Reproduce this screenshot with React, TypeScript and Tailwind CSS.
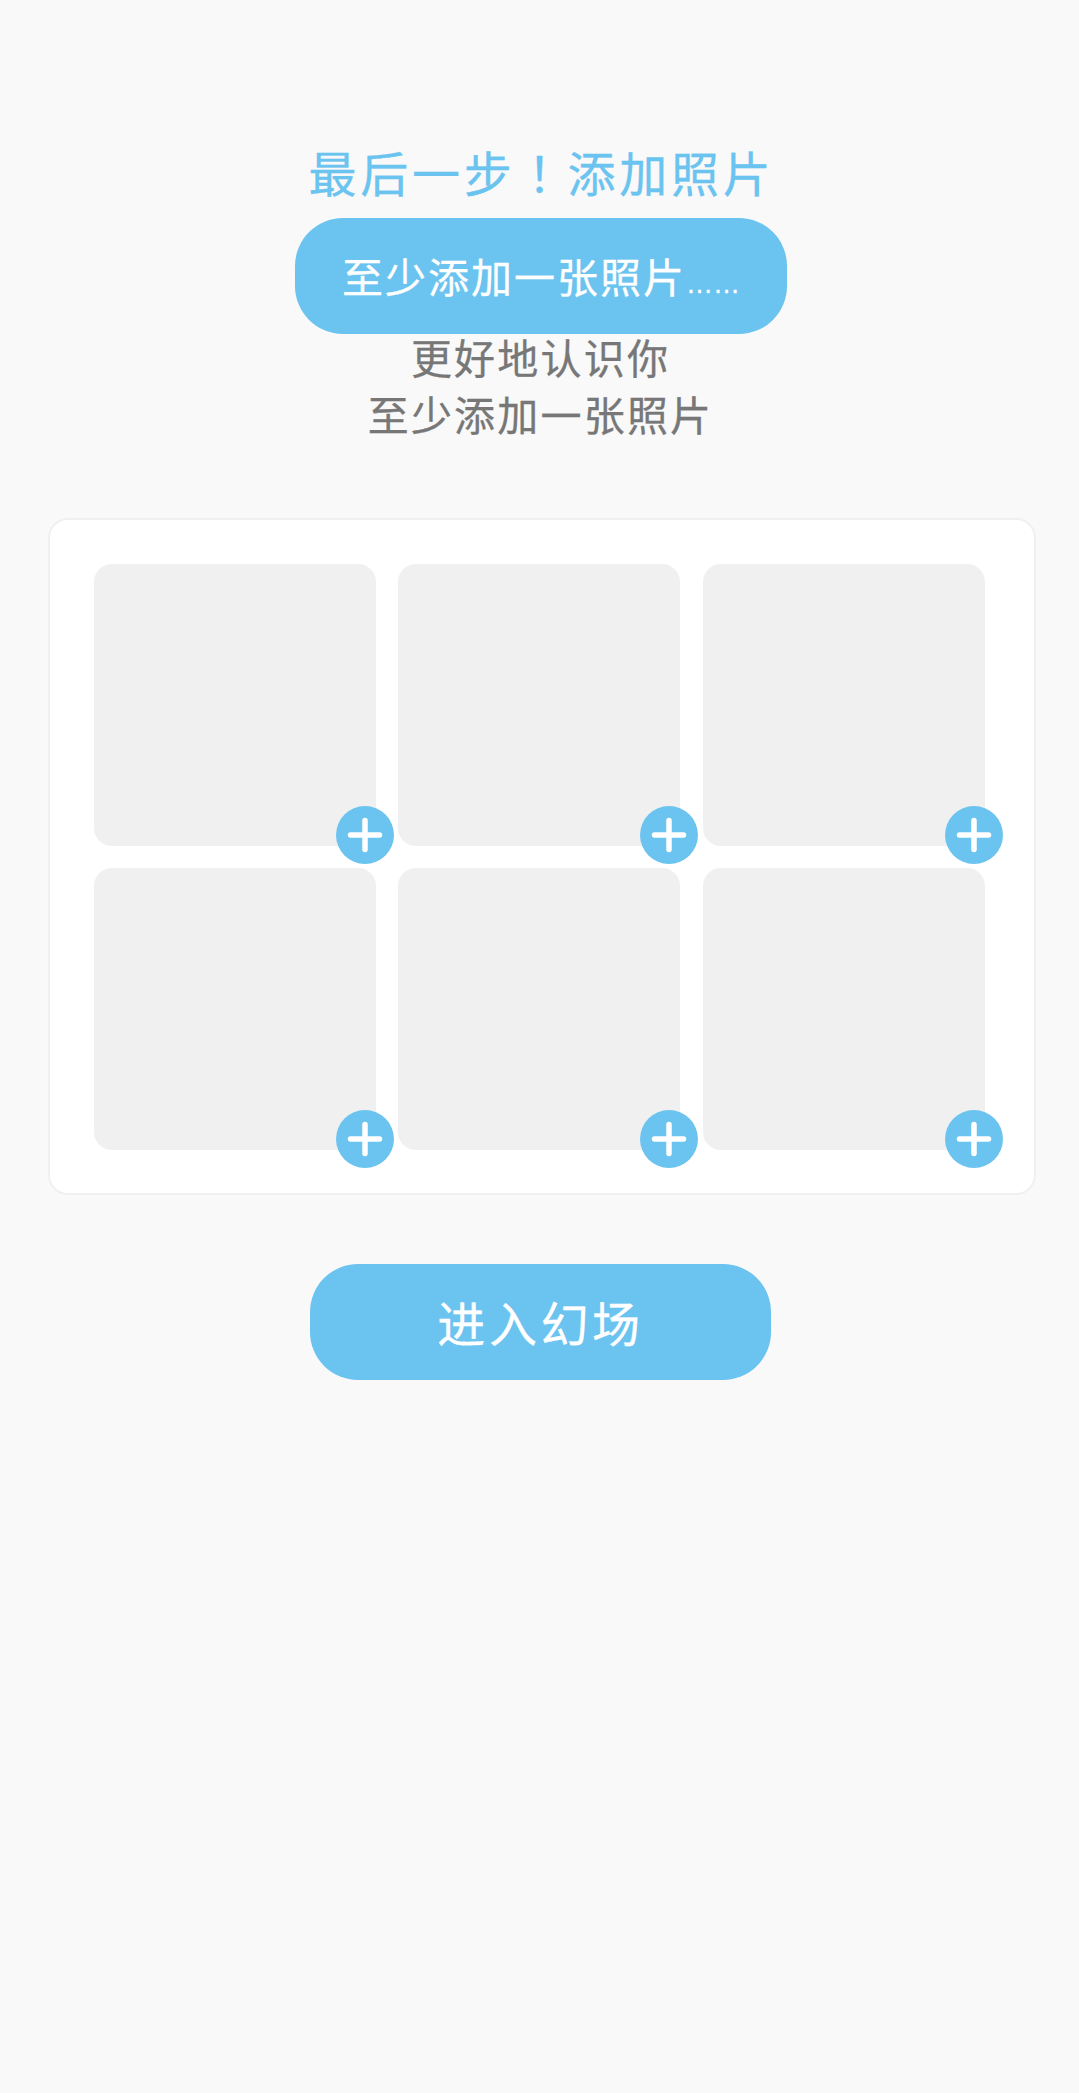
const FONT = '[font-family:"Noto_Sans_CJK_SC","Noto_Sans",sans-serif]'
const HEAVY = '[-webkit-text-stroke:0.3px_currentColor]'

function PhotoSlot() {
  return (
    <div className="relative h-[282px] w-[282px] rounded-[18px] bg-[#f0f0f0]">
      <button className="absolute -right-[18px] -bottom-[18px] flex h-[58px] w-[58px] items-center justify-center rounded-full bg-[#6bc3ef]">
        <svg width="36" height="36" viewBox="0 0 36 36" fill="none" stroke="#fff" strokeWidth="5.5" strokeLinecap="round">
          <path d="M18 3.5v29M3.5 18h29" />
        </svg>
      </button>
    </div>
  )
}

export default function App() {
  return (
    <div className={`${FONT} flex min-h-[2093px] flex-col items-center bg-[#f9f9f9] pt-[137px]`}>
      <h1 className={`${HEAVY} ml-[4px] h-[68px] text-[48px] leading-[68px] font-normal tracking-[3.8px] whitespace-nowrap text-[#6bc3ef]`}>
        最后一步<span className="[font-family:'Noto_Sans_CJK_TC',sans-serif]">！</span>添加照片
      </h1>
      <div className="mt-[13px] ml-[2px] flex h-[116px] w-[492px] items-center justify-center rounded-[48px] bg-[#6bc3ef] text-[41px] tracking-[2px] whitespace-nowrap text-white">
        <span className={`${HEAVY} ml-[1px]`}>
          至少添加一张照片
          <span className="text-[27px] tracking-normal [font-family:'Liberation_Sans',sans-serif]">……</span>
        </span>
      </div>
      <p className={`${HEAVY} mt-[-6px] ml-[2px] text-center text-[41px] leading-[57px] tracking-[2.2px] text-[#777777]`}>
        更好地认识你
        <br />
        至少添加一张照片
      </p>
      <div className="mt-[76px] ml-[4px] w-[988px] rounded-[20px] border-2 border-[#f0f0f0] bg-white pt-[44px] pr-[48px] pb-[43px] pl-[44px]">
        <div className="grid grid-cols-[repeat(3,282px)] gap-x-[22.5px] gap-y-[22px]">
          <PhotoSlot />
          <PhotoSlot />
          <PhotoSlot />
          <PhotoSlot />
          <PhotoSlot />
          <PhotoSlot />
        </div>
      </div>
      <button className="mt-[69px] ml-[2px] flex h-[116px] w-[461px] items-center justify-center rounded-[48px] bg-[#6bc3ef] pb-[2px] text-[48px] tracking-[3.6px] text-white">
        <span className={HEAVY}>进入幻场</span>
      </button>
    </div>
  )
}
